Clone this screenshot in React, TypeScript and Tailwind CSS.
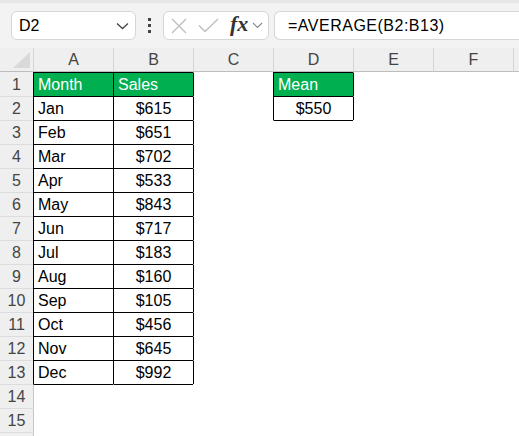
const cols = ["A", "B", "C", "D", "E", "F", ""];

const data: Record<number, string[]> = {
  2: ["Jan", "$615"],
  3: ["Feb", "$651"],
  4: ["Mar", "$702"],
  5: ["Apr", "$533"],
  6: ["May", "$843"],
  7: ["Jun", "$717"],
  8: ["Jul", "$183"],
  9: ["Aug", "$160"],
  10: ["Sep", "$105"],
  11: ["Oct", "$456"],
  12: ["Nov", "$645"],
  13: ["Dec", "$992"],
};

// cells that belong to a bordered table
const inTable = (r: number, c: number) =>
  (r >= 1 && r <= 13 && (c === 0 || c === 1)) || ((r === 1 || r === 2) && c === 3);

const cellText = (r: number, c: number) => {
  if (r === 1 && c === 0) return "Month";
  if (r === 1 && c === 1) return "Sales";
  if (r === 1 && c === 3) return "Mean";
  if (r === 2 && c === 3) return "$550";
  if (data[r] && c < 2) return data[r][c];
  return "";
};

const Cell = ({ r, c }: { r: number; c: number }) => {
  const leftBlack = inTable(r, c) || inTable(r, c - 1);
  const topBlack = inTable(r, c) || inTable(r - 1, c);
  const green = r === 1 && inTable(r, c);
  const text = cellText(r, c);
  const centered = (c === 1 && r > 1) || (c === 3 && r === 2);
  return (
    <div
      className={[
        "h-[24px] flex items-center text-[16px] overflow-hidden whitespace-nowrap border-l border-t",
        leftBlack ? "border-l-black" : c === 0 ? "border-l-[#c6c6c6]" : "border-l-transparent",
        topBlack ? "border-t-black" : "border-t-transparent",
        green ? "bg-[#00b050] text-white" : "bg-white text-black",
        centered ? "justify-center" : "pl-[4px]",
      ].join(" ")}
    >
      {text}
    </div>
  );
};

const App = () => {
  const rows = Array.from({ length: 16 }, (_, i) => i + 1);
  return (
    <div
      className="w-[519px] h-[436px] overflow-hidden bg-white"
      style={{ fontFamily: '"Liberation Sans", Arial, sans-serif' }}
    >
      {/* formula bar */}
      <div className="h-[48px] bg-[#f3f3f3] border-t-[3px] border-t-[#e6e6e6] flex items-start pt-[8px] pl-[11px]">
        <div className="w-[125px] h-[29px] bg-white border border-[#d6d6d6] rounded-[6px] flex items-center justify-between pl-[7px] pr-[6px] text-[16px] text-black">
          <span>D2</span>
          <svg width="13" height="8" viewBox="0 0 13 8" fill="none" stroke="#444" strokeWidth="1.3">
            <path d="M1 1.5 L6.5 6.5 L12 1.5" />
          </svg>
        </div>
        <div className="w-[27px] h-[29px] flex flex-col items-center justify-center gap-[3px]">
          <div className="w-[3px] h-[3px] bg-[#444]" />
          <div className="w-[3px] h-[3px] bg-[#444]" />
          <div className="w-[3px] h-[3px] bg-[#444]" />
        </div>
        <div className="w-[106px] h-[29px] bg-white border border-[#d6d6d6] rounded-[6px] flex items-center pl-[7px] pr-[3px]">
          <svg width="16" height="16" viewBox="0 0 16 16" fill="none" stroke="#bdbdbd" strokeWidth="1.3">
            <path d="M1 1 L15 15 M15 1 L1 15" />
          </svg>
          <svg className="ml-[11px]" width="21" height="15" viewBox="0 0 21 15" fill="none" stroke="#bdbdbd" strokeWidth="1.3">
            <path d="M1 7.5 L7 13.5 L20 1" />
          </svg>
          <span
            className="ml-[11px] text-[22px] italic font-bold text-[#333] leading-none -mt-[3px]"
            style={{ fontFamily: '"Liberation Serif", "Times New Roman", serif' }}
          >
            fx
          </span>
          <svg className="ml-[4px]" width="11" height="7" viewBox="0 0 11 7" fill="none" stroke="#888" strokeWidth="1.1">
            <path d="M1 1 L5.5 5.5 L10 1" />
          </svg>
        </div>
        <div className="ml-[5px] flex-1 h-[29px] bg-white border border-[#d6d6d6] border-r-0 rounded-l-[6px] flex items-center pl-[13px] text-[16px] text-black tracking-[0.5px]">
          =AVERAGE(B2:B13)
        </div>
      </div>

      {/* grid */}
      <div className="grid grid-cols-[33px_repeat(7,80px)]">
        {/* column headers */}
        <div className="h-[24px] bg-[#efefef] border-b border-b-[#bdbdbd] relative">
          <svg className="absolute left-[13px] top-[4px]" width="17" height="16" viewBox="0 0 17 16">
            <polygon points="17,0 17,16 0,16" fill="#d9d9d9" />
          </svg>
        </div>
        {cols.map((c, i) => (
          <div
            key={i}
            className="h-[24px] bg-[#efefef] border-b border-l border-b-[#bdbdbd] border-l-[#d4d4d4] flex items-center justify-center text-[16px] text-[#444]"
          >
            {c}
          </div>
        ))}

        {rows.map((r) => (
          <div key={r} className="contents">
            <div
              className={`h-[24px] bg-[#efefef] flex items-center justify-center text-[16px] text-[#444] border-t ${
                r === 1 ? "border-t-[#efefef]" : "border-t-[#dcdcdc]"
              }`}
            >
              {r < 16 ? r : ""}
            </div>
            {cols.map((_, c) => (
              <Cell key={c} r={r} c={c} />
            ))}
          </div>
        ))}
      </div>
    </div>
  );
};

export default App;
